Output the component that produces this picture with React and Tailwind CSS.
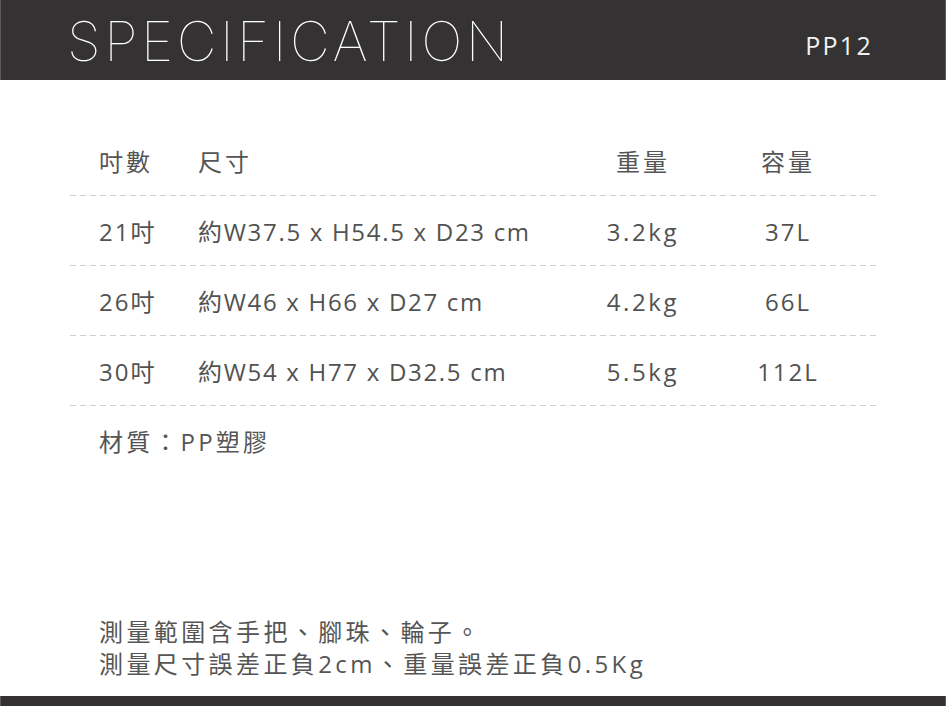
import React from "react";

const rows = [
  { size: "21吋", dim: "約W37.5 x H54.5 x D23 cm", w: "3.2kg", v: "37L" },
  { size: "26吋", dim: "約W46 x H66 x D27 cm", w: "4.2kg", v: "66L" },
  { size: "30吋", dim: "約W54 x H77 x D32.5 cm", w: "5.5kg", v: "112L" },
];

function Dash() {
  return (
    <div className="h-px w-full bg-[repeating-linear-gradient(to_right,#cfcfcf_0px,#cfcfcf_6px,transparent_6px,transparent_10px)]" />
  );
}

export default function App() {
  return (
    <div className="w-[946px] h-[706px] bg-white flex flex-col overflow-hidden font-['Open_Sans','Noto_Sans_CJK_TC',sans-serif] text-[#525252]">
      <header className="h-[80px] shrink-0 bg-[#343233] border-x border-[#5c5a5b] flex items-center justify-between pl-[66px] pr-[72px]">
        <h1 className="font-['Inter',sans-serif] font-thin text-[55px] leading-none text-white tracking-[3.5px] pt-[2px]">
          SPECIFICATION
        </h1>
        <span className="text-[25px] leading-none text-[#f2f2f2] tracking-[2.3px] pt-[10px]">PP12</span>
      </header>

      <main className="flex-1 flex flex-col px-[70px] pt-[46px]">
        <div className="h-[69px] flex items-center pt-[3px] pl-[29px] text-[24px] tracking-[3px] text-[#555]">
          <div className="w-[99px]">吋數</div>
          <div className="w-[380px]">尺寸</div>
          <div className="w-[130px] text-center">重量</div>
          <div className="w-[160px] text-center">容量</div>
        </div>
        <Dash />
        {rows.map((r) => (
          <React.Fragment key={r.size}>
            <div className="h-[69px] flex items-center pt-[3px] pl-[29px] text-[24px] tracking-[1.7px]">
              <div className="w-[99px] tracking-[2px]">{r.size}</div>
              <div className="w-[380px]">{r.dim}</div>
              <div className="w-[130px] text-center tracking-[2.6px]">{r.w}</div>
              <div className="w-[160px] text-center tracking-[2px]">{r.v}</div>
            </div>
            <Dash />
          </React.Fragment>
        ))}
        <div className="h-[69px] flex items-center pt-[3px] pl-[29px] text-[24px] tracking-[3.2px] text-[#555]">
          材質：PP塑膠
        </div>
        <div className="mt-[141px] pl-[29px] text-[24px] leading-[32px] tracking-[3.4px] text-[#555]">
          <p>測量範圍含手把、腳珠、輪子。</p>
          <p>測量尺寸誤差正負2cm、重量誤差正負0.5Kg</p>
        </div>
      </main>

      <footer className="h-[10px] shrink-0 bg-[#333132] border-x border-[#5c5a5b]" />
    </div>
  );
}
